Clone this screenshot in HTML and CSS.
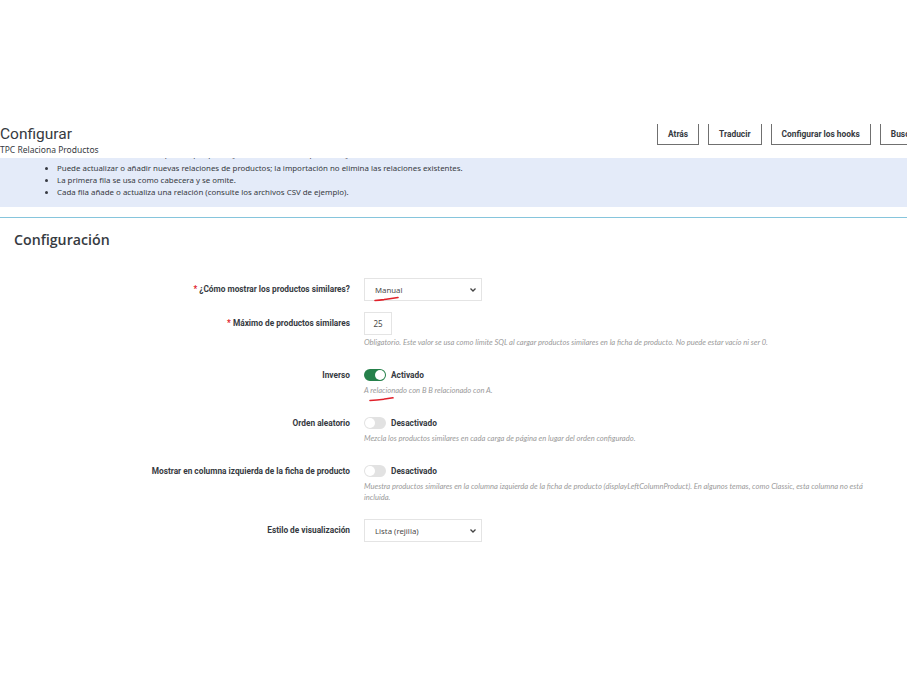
FILE: index.html
```html
<!DOCTYPE html>
<html lang="es">
<head>
    <meta charset="UTF-8">
    <meta name="viewport" content="width=device-width, initial-scale=1.0">
    <title>Configurar</title>
    <link rel="stylesheet" href="styles.css">
</head>
<body>
    <div class="page-head">
        <div class="page-title">
            <h1>Configurar</h1>
            <p class="subtitle">TPC Relaciona Productos</p>
        </div>
        <div class="toolbar">
            <a href="#" class="btn">Atrás</a>
            <a href="#" class="btn">Traducir</a>
            <a href="#" class="btn">Configurar los hooks</a>
            <a href="#" class="btn">Buscar actualizaciones</a>
        </div>
    </div>

    <div class="alert-info">
        <ul>
            <li>El archivo debe ser un CSV separado por punto y coma, con el id del producto y el id relacionado.</li>
            <li>Puede actualizar o añadir nuevas relaciones de productos; la importación no elimina las relaciones existentes.</li>
            <li>La primera fila se usa como cabecera y se omite.</li>
            <li>Cada fila añade o actualiza una relación (consulte los archivos CSV de ejemplo).</li>
        </ul>
    </div>

    <div class="panel">
        <h2 class="panel-heading">Configuración</h2>

        <div class="form-group">
            <label class="control-label"><span class="required">*</span> ¿Cómo mostrar los productos similares?</label>
            <div class="control">
                <div class="select-wrap">
                    <select class="form-select">
                        <option>Manual</option>
                    </select>
                    <svg class="chevron" width="8" height="6" viewBox="0 0 8 6"><path d="M1.5 1.5 L4 4 L6.5 1.5" fill="none" stroke="#444" stroke-width="1.3"/></svg>
                    <svg class="mark mark-select" width="26" height="6" viewBox="0 0 26 6"><path d="M1 4.5 Q12 3.6 24 1.5" fill="none" stroke="#e0202a" stroke-width="1.6" stroke-linecap="round"/></svg>
                </div>
            </div>
        </div>

        <div class="form-group">
            <label class="control-label"><span class="required">*</span> Máximo de productos similares</label>
            <div class="control">
                <input class="form-input" type="text" value="25">
                <p class="help">Obligatorio. Este valor se usa como límite SQL al cargar productos similares en la ficha de producto. No puede estar vacío ni ser 0.</p>
            </div>
        </div>

        <div class="form-group switch-group">
            <label class="control-label">Inverso</label>
            <div class="control">
                <div class="switch-line">
                    <span class="switch on"></span>
                    <span class="switch-text">Activado</span>
                </div>
                <p class="help">A relacionado con B B relacionado con A.
                    <svg class="mark mark-help" width="26" height="6" viewBox="0 0 26 6"><path d="M1 4.5 Q12 4 24 1.8" fill="none" stroke="#e0202a" stroke-width="1.6" stroke-linecap="round"/></svg>
                </p>
            </div>
        </div>

        <div class="form-group switch-group">
            <label class="control-label">Orden aleatorio</label>
            <div class="control">
                <div class="switch-line">
                    <span class="switch"></span>
                    <span class="switch-text">Desactivado</span>
                </div>
                <p class="help">Mezcla los productos similares en cada carga de página en lugar del orden configurado.</p>
            </div>
        </div>

        <div class="form-group switch-group">
            <label class="control-label">Mostrar en columna izquierda de la ficha de producto</label>
            <div class="control">
                <div class="switch-line">
                    <span class="switch"></span>
                    <span class="switch-text">Desactivado</span>
                </div>
                <p class="help">Muestra productos similares en la columna izquierda de la ficha de producto (displayLeftColumnProduct). En algunos temas, como Classic, esta columna no está incluida.</p>
            </div>
        </div>

        <div class="form-group">
            <label class="control-label">Estilo de visualización</label>
            <div class="control">
                <div class="select-wrap">
                    <select class="form-select">
                        <option>Lista (rejilla)</option>
                    </select>
                    <svg class="chevron" width="8" height="6" viewBox="0 0 8 6"><path d="M1.5 1.5 L4 4 L6.5 1.5" fill="none" stroke="#444" stroke-width="1.3"/></svg>
                </div>
            </div>
        </div>
    </div>
</body>
</html>
```

FILE: styles.css
```css
*{
    margin: 0;
    padding: 0;
    box-sizing: border-box;
}
html,
body{
    overflow: hidden;
}
body{
    width: 907px;
    font-family: "Noto Sans", "Open Sans", sans-serif;
    color: #363a41;
    background-color: #fff;
}

/* cabecera */
.page-head{
    display: grid;
    grid-template-columns: 657px max-content;
    align-items: end;
    height: 158px;
    padding-bottom: 3px;
    background-color: #fff;
    position: relative;
    z-index: 2;
}
.page-title h1{
    font-family: Roboto, sans-serif;
    font-size: 15.5px;
    font-weight: 400;
    line-height: 20px;
    color: #363a41;
}
.page-title .subtitle{
    font-size: 8.5px;
    line-height: 11px;
    color: #363a41;
}
.toolbar{
    display: flex;
    gap: 9px;
    align-self: start;
    margin-top: 124px;
}
.btn{
    display: block;
    height: 21px;
    padding: 0 10px;
    border: 1px solid #707070;
    border-top: none;
    font-family: Roboto, sans-serif;
    font-size: 8.4px;
    font-weight: 700;
    line-height: 20px;
    color: #363a41;
    text-decoration: none;
    white-space: nowrap;
}

/* aviso */
.alert-info{
    display: flow-root;
    height: 49px;
    overflow: hidden;
    background-color: #e4ebf9;
}
.alert-info ul{
    margin-top: -10px;
    padding-left: 57px;
    font-size: 7.9px;
    line-height: 12px;
    color: #363a41;
}
.alert-info li:first-child{
    margin-bottom: 2px;
}

/* panel */
.panel{
    margin-top: 10px;
    border-top: 1px solid #86c5dc;
}
.panel-heading{
    padding: 12px 14px 0;
    height: 60px;
    font-family: "Open Sans", sans-serif;
    font-size: 14.2px;
    font-weight: 600;
    line-height: 20px;
    color: #363a41;
}
.form-group{
    display: grid;
    grid-template-columns: 350px 505px;
    column-gap: 14px;
    margin-bottom: 11px;
}
.switch-group{
    padding-top: 3px;
}
.control-label{
    text-align: right;
    font-family: Roboto, sans-serif;
    font-size: 8.3px;
    font-weight: 700;
    line-height: 23px;
    color: #363a41;
}
.switch-group .control-label{
    line-height: 16px;
}
.required{
    color: #e0202a;
}
.control{
    position: relative;
}

.select-wrap{
    position: relative;
    width: 118px;
    height: 23px;
}
.form-select{
    display: block;
    appearance: none;
    width: 118px;
    height: 23px;
    padding: 0 10px;
    border: 1px solid #e4e4e4;
    background-color: #fff;
    font-family: "Noto Sans", sans-serif;
    font-size: 7.8px;
    color: #4a4a4a;
}
.chevron{
    position: absolute;
    top: 9px;
    right: 5px;
}
.form-input{
    display: block;
    width: 28px;
    height: 23px;
    padding: 0;
    border: 1px solid #e4e4e4;
    text-align: center;
    font-family: "Noto Sans", sans-serif;
    font-size: 8px;
    color: #4a4a4a;
}
.help{
    position: relative;
    margin: 2px 0 5px;
    font-family: Lato, sans-serif;
    font-style: italic;
    font-size: 7.6px;
    line-height: 11px;
    color: #9a9a9a;
}

/* interruptor */
.switch-line{
    display: flex;
    align-items: center;
    gap: 5px;
    height: 16px;
}
.switch{
    position: relative;
    width: 22px;
    height: 12px;
    border-radius: 6px;
    background-color: #e2e2e2;
}
.switch::after{
    content: "";
    position: absolute;
    top: 1px;
    left: 1px;
    width: 10px;
    height: 10px;
    border-radius: 50%;
    background-color: #fff;
}
.switch.on{
    background-color: #25804a;
}
.switch.on::after{
    left: 11px;
}
.switch-text{
    font-family: Roboto, sans-serif;
    font-size: 8.3px;
    font-weight: 700;
    color: #363a41;
}

/* marcas rojas de la captura */
.mark{
    position: absolute;
}
.mark-select{
    left: 10px;
    top: 18px;
}
.mark-help{
    left: 5px;
    top: 11px;
}
```
